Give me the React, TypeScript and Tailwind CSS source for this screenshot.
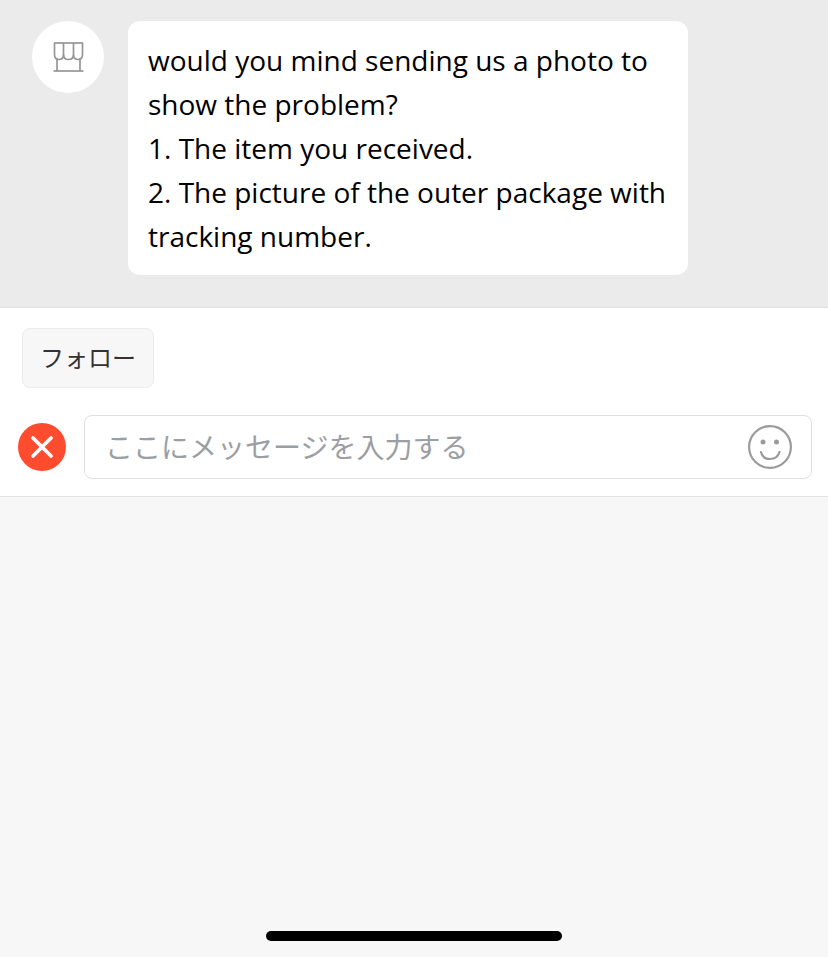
import { X } from 'lucide-react';

const StoreIcon = () => (
  <svg width="32" height="32" viewBox="0 0 32 32" fill="none" stroke="#969696" strokeWidth="1.7">
    <path d="M2 2H31" />
    <path d="M2.5 2V13.5C2.5 17 4.5 18.5 7 18.5C9.5 18.5 11.5 17 11.5 13.5V2" />
    <path d="M11.5 13.5C11.5 17 13.5 18.5 16.5 18.5C19.5 18.5 21.5 17 21.5 13.5V2" />
    <path d="M21.5 13.5C21.5 17 23.5 18.5 26 18.5C28.5 18.5 30.5 17 30.5 13.5V2" />
    <path d="M5 17V30M28 17V30" />
    <path d="M1.5 30H31.5" />
  </svg>
);

const SmileIcon = () => (
  <svg width="44" height="44" viewBox="0 0 44 44" fill="none" stroke="#9b9b9b" strokeWidth="2.2">
    <circle cx="22" cy="22" r="20.9" />
    <circle cx="15" cy="17" r="2.5" fill="#9b9b9b" stroke="none" />
    <circle cx="28.5" cy="17" r="2.5" fill="#9b9b9b" stroke="none" />
    <path d="M13 27C14 32 18 34 22 34C26 34 30 32 31.5 27" strokeLinecap="round" />
  </svg>
);

export default function App() {
  return (
    <div className="flex min-h-[957px] flex-col bg-[#f7f7f7] font-['Open_Sans','Noto_Sans_CJK_JP',sans-serif]">
      {/* Mensajes */}
      <div className="flex h-[308px] items-start gap-6 border-b border-[#e0e0e0] bg-[#ebebeb] pl-8 pt-[21px]">
        <div className="flex h-[72px] w-[72px] items-center justify-center rounded-full bg-white">
          <StoreIcon />
        </div>
        <div className="w-[560px] rounded-xl bg-white px-5 py-[17px] text-[28px] leading-[44px] text-black">
          would you mind sending us a photo to show the problem?
          <br />
          1. The item you received.
          <br />
          2. The picture of the outer package with tracking number.
        </div>
      </div>

      {/* Input */}
      <div className="h-[189px] border-b border-[#e3e3e3] bg-white">
        <div className="pl-[22px] pt-5">
          <button className="h-[60px] w-[132px] rounded-lg border border-[#ebebeb] bg-[#f7f7f7] text-2xl text-[#333333]">
            フォロー
          </button>
        </div>
        <div className="mt-[27px] flex items-center pl-[18px] pr-4">
          <div className="flex h-12 w-12 items-center justify-center rounded-full bg-[#ff4b2e]">
            <X className="h-9 w-9 text-white" strokeWidth={2.5} />
          </div>
          <div className="ml-[18px] flex h-16 flex-1 items-center justify-between rounded-lg border border-[#e0e0e0] bg-white pl-5 pr-[19px]">
            <span className="text-[28px] text-[#9b9ea3]">ここにメッセージを入力する</span>
            <SmileIcon />
          </div>
        </div>
      </div>

      {/* Home indicator */}
      <div className="flex flex-1 items-end justify-center pb-4">
        <div className="h-2.5 w-[296px] rounded-full bg-black" />
      </div>
    </div>
  );
}
